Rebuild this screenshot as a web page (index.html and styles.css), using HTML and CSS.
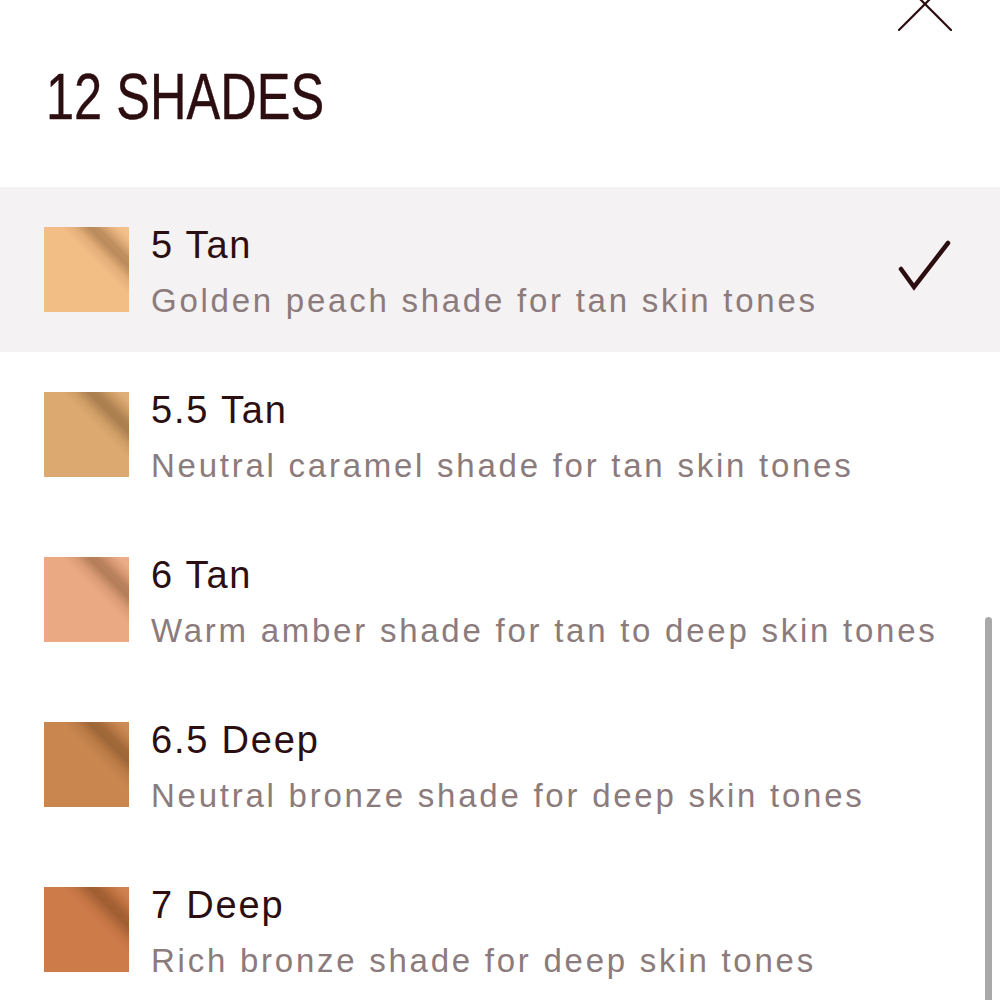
FILE: index.html
```html
<!DOCTYPE html>
<html lang="en">
<head>
<meta charset="utf-8">
<title>12 Shades</title>
<link rel="stylesheet" href="styles.css">
</head>
<body>
<div class="sheet">
  <div class="topbar">
    <svg class="close" width="54" height="31" viewBox="0 0 54 31" aria-label="Close">
      <line x1="1" y1="30" x2="53" y2="-22" />
      <line x1="53" y1="30" x2="1" y2="-22" />
    </svg>
  </div>
  <header class="head">
    <h1 class="title">12 SHADES</h1>
  </header>
  <ul class="list">
    <li class="row selected">
      <span class="swatch" style="--c:#f3bd86"></span>
      <div class="text">
        <div class="name">5 Tan</div>
        <div class="desc">Golden peach shade for tan skin tones</div>
      </div>
      <svg class="check" width="54" height="52" viewBox="0 0 54 52" aria-label="Selected">
        <path d="M3 30 L16 48 L50 4" />
      </svg>
    </li>
    <li class="row">
      <span class="swatch" style="--c:#dcaa71"></span>
      <div class="text">
        <div class="name">5.5 Tan</div>
        <div class="desc">Neutral caramel shade for tan skin tones</div>
      </div>
    </li>
    <li class="row">
      <span class="swatch" style="--c:#eaa982"></span>
      <div class="text">
        <div class="name">6 Tan</div>
        <div class="desc">Warm amber shade for tan to deep skin tones</div>
      </div>
    </li>
    <li class="row">
      <span class="swatch" style="--c:#c9864f"></span>
      <div class="text">
        <div class="name">6.5 Deep</div>
        <div class="desc">Neutral bronze shade for deep skin tones</div>
      </div>
    </li>
    <li class="row">
      <span class="swatch" style="--c:#cd7b48"></span>
      <div class="text">
        <div class="name">7 Deep</div>
        <div class="desc">Rich bronze shade for deep skin tones</div>
      </div>
    </li>
  </ul>
  <div class="scrollbar"></div>
</div>
</body>
</html>
```
FILE: styles.css
```css
* { box-sizing: border-box; }
html, body {
  margin: 0;
  padding: 0;
  background: #ffffff;
}
body {
  font-family: "Liberation Sans", Arial, sans-serif;
  color: #2c0e11;
  overflow: hidden;
}
.sheet {
  position: relative;
  width: 1000px;
  height: 1000px;
  overflow: hidden;
}
.topbar {
  display: flex;
  justify-content: flex-end;
  height: 31px;
  padding-right: 48px;
}
.close line {
  stroke: #2c0e11;
  stroke-width: 2.2;
  stroke-linecap: round;
}
.head {
  padding: 34px 0 0 46px;
  height: 156px;
}
.title {
  margin: 0;
  display: inline-block;
  font-size: 64px;
  line-height: 64px;
  font-weight: 400;
  letter-spacing: 0;
  transform: scaleX(0.79);
  transform-origin: left center;
  color: #2c0e11;
  white-space: nowrap;
  -webkit-text-stroke: 0.4px #2c0e11;
}
.list {
  list-style: none;
  margin: 0;
  padding: 0;
}
.row {
  display: flex;
  align-items: flex-start;
  height: 165px;
  padding: 40px 48px 40px 44px;
}
.row.selected {
  background: #f4f2f2;
}
.swatch {
  flex: none;
  width: 85px;
  height: 85px;
  background:
    linear-gradient(45deg,
      rgba(0,0,0,0) 0%,
      rgba(0,0,0,0) 60%,
      rgba(80,40,10,0.10) 68%,
      rgba(70,35,5,0.32) 76%,
      rgba(70,35,5,0.30) 81%,
      rgba(90,50,20,0.12) 88%,
      rgba(255,255,255,0.04) 94%,
      rgba(255,255,255,0.06) 100%),
    var(--c);
}
.text {
  flex: 1;
  min-width: 0;
  margin-left: 22px;
}
.name {
  font-size: 38px;
  line-height: 36px;
  letter-spacing: 1.8px;
  color: #2c0e11;
  white-space: nowrap;
}
.desc {
  margin-top: 20px;
  font-size: 33px;
  line-height: 36px;
  letter-spacing: 2.75px;
  color: #8c7b7c;
  white-space: nowrap;
}
.check {
  flex: none;
  margin-top: 12px;
}
.check path {
  fill: none;
  stroke: #2c0e11;
  stroke-width: 4.5;
  stroke-linecap: round;
  stroke-linejoin: miter;
}
.scrollbar {
  position: absolute;
  left: 985px;
  top: 617px;
  width: 7px;
  height: 400px;
  border-radius: 4px;
  background: #a9a9a9;
}
```
